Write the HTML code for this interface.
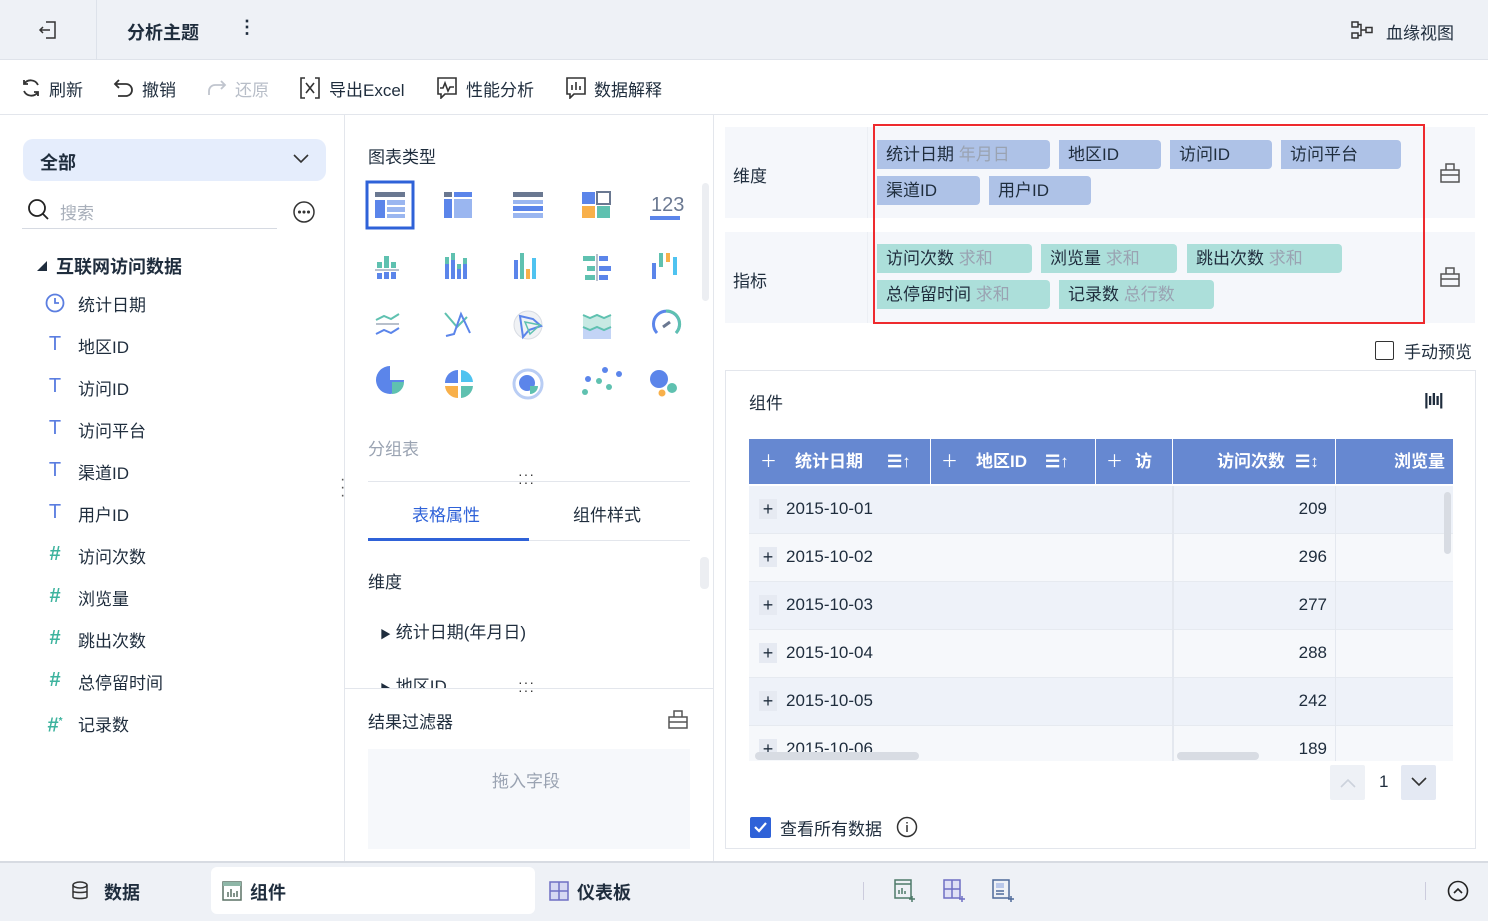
<!DOCTYPE html>
<html><head><meta charset="utf-8"><style>
*{box-sizing:border-box;margin:0;padding:0}
body{width:1488px;height:921px;overflow:hidden;background:#fff;font-family:"Liberation Sans","Noto Sans CJK SC",sans-serif;color:#1f2d3d;position:relative;font-size:17px}
.a{position:absolute;white-space:nowrap}
.tag{position:absolute;height:29px;line-height:29px;padding-left:9px;font-size:17px;border-radius:0 4px 4px 0;color:#1f2d3d;white-space:nowrap}
.d{background:#aec2e7}.m{background:#acdfda}
.g{color:#9aa3b2}
.fld{position:absolute;left:44px;font-size:17px;white-space:nowrap;width:250px;height:24px}
.fld i{position:absolute;left:0;top:0;width:22px;font-style:normal;text-align:center;font-size:20px;line-height:22px}
.fld span{position:absolute;left:34px;top:0;white-space:nowrap}
.row{position:absolute;left:749px;width:704px;height:48px;border-bottom:1px solid #e6eaf0}
.row .p{position:absolute;left:10px;top:13px;width:18px;height:20px;background:#e6eaf2;text-align:center;line-height:20px;font-size:18px}
.row .t{position:absolute;left:37px;top:13px;font-size:17px}
.row .n{position:absolute;left:520px;width:58px;text-align:right;top:13px;font-size:17px}
.th{position:absolute;top:439px;height:45px;background:#6688d1;color:#fff;font-weight:bold;font-size:17px;line-height:45px;white-space:nowrap}
.tb{position:absolute;top:76px;font-size:17px;white-space:nowrap}
</style></head><body>
<!-- top bar -->
<div class="a" style="left:0;top:0;width:1488px;height:60px;background:#eef1f6;border-bottom:1px solid #dfe3ea"></div>
<div class="a" style="left:96px;top:0;width:1px;height:60px;background:#dde2ea"></div>
<svg class="a" style="left:37px;top:19px" width="22" height="22" viewBox="0 0 22 22" fill="none" stroke="#333" stroke-width="1.5"><path d="M9 3h9v16H9M3 11h10M6 8l-3 3 3 3"/></svg>
<div class="a" style="left:127px;top:19px;font-size:18px;font-weight:bold">分析主题</div>
<div class="a" style="left:238px;top:17px;font-size:18px;font-weight:bold">⋮</div>
<svg class="a" style="left:1351px;top:21px" width="22" height="18" viewBox="0 0 22 18" fill="none" stroke="#333" stroke-width="1.5"><rect x="1" y="1" width="6" height="5"/><rect x="1" y="12" width="6" height="5"/><rect x="15" y="6.5" width="6" height="5"/><path d="M7 3.5h3v11H7M10 9h5"/></svg>
<div class="a" style="left:1386px;top:19px;font-size:17px">血缘视图</div>
<!-- toolbar -->
<div class="a" style="left:0;top:114px;width:1488px;height:1px;background:#e3e6ec"></div>
<svg class="a" style="left:20px;top:77px" width="22" height="22" viewBox="0 0 22 22" fill="none" stroke="#333" stroke-width="1.8"><path d="M18 8A8 8 0 0 0 4 7M4 3v4h4M4 14a8 8 0 0 0 14 1M18 19v-4h-4"/></svg>
<div class="tb" style="left:49px">刷新</div>
<svg class="a" style="left:113px;top:77px" width="22" height="22" viewBox="0 0 22 22" fill="none" stroke="#333" stroke-width="1.8"><path d="M6 3L2 7l4 4M2 7h11a6 6 0 0 1 0 12H5"/></svg>
<div class="tb" style="left:142px">撤销</div>
<svg class="a" style="left:206px;top:77px" width="22" height="22" viewBox="0 0 22 22" fill="none" stroke="#c0c5ce" stroke-width="1.8"><path d="M15 4l4 4-4 4M19 8H9a6 6 0 0 0-6 6v4"/></svg>
<div class="tb" style="left:235px;color:#b8bec8">还原</div>
<svg class="a" style="left:300px;top:77px" width="20" height="22" viewBox="0 0 20 22" fill="none" stroke="#333" stroke-width="1.6"><path d="M5 1H1v20h4M15 1h4v20h-4M6 6l8 10M14 6L6 16"/></svg>
<div class="tb" style="left:329px">导出Excel</div>
<svg class="a" style="left:437px;top:77px" width="20" height="22" viewBox="0 0 20 22" fill="none" stroke="#333" stroke-width="1.6"><path d="M1 1h18v16H8l-4 4v-4H1zM3 11h3l2-5 3 8 2-4h4"/></svg>
<div class="tb" style="left:466px">性能分析</div>
<svg class="a" style="left:566px;top:77px" width="20" height="22" viewBox="0 0 20 22" fill="none" stroke="#333" stroke-width="1.6"><path d="M1 1h18v16H8l-4 4v-4H1zM6 13V8M10 13V5M14 13V9"/></svg>
<div class="tb" style="left:594px">数据解释</div>
<!-- left panel -->
<div class="a" style="left:344px;top:115px;width:1px;height:747px;background:#e3e6ec"></div>
<div class="a" style="left:23px;top:139px;width:303px;height:42px;background:#e5edfc;border-radius:10px"></div>
<div class="a" style="left:40px;top:149px;font-size:18px;font-weight:bold">全部</div>
<svg class="a" style="left:292px;top:153px" width="18" height="12" viewBox="0 0 18 12" fill="none" stroke="#333" stroke-width="1.6"><path d="M2 2l7 7 7-7"/></svg>
<svg class="a" style="left:27px;top:198px" width="24" height="24" viewBox="0 0 24 24" fill="none" stroke="#222" stroke-width="1.8"><circle cx="10" cy="10" r="8"/><path d="M16 16l5 5"/></svg>
<div class="a" style="left:60px;top:199px;font-size:17px;color:#a8afba">搜索</div>
<div class="a" style="left:22px;top:228px;width:255px;height:1px;background:#d6dae2"></div>
<svg class="a" style="left:292px;top:200px" width="24" height="24" viewBox="0 0 24 24" fill="none" stroke="#333" stroke-width="1.5"><circle cx="12" cy="12" r="10"/><circle cx="7.5" cy="12" r=".8" fill="#333"/><circle cx="12" cy="12" r=".8" fill="#333"/><circle cx="16.5" cy="12" r=".8" fill="#333"/></svg>
<div class="a" style="left:37px;top:258px;font-size:10px">◢</div>
<div class="a" style="left:56px;top:253px;font-size:18px;font-weight:bold">互联网访问数据</div>
<div class="fld" style="top:291px"><svg style="position:absolute;left:1px;top:2px" width="20" height="20" viewBox="0 0 20 20" fill="none" stroke="#5b7ee0" stroke-width="1.8"><circle cx="10" cy="10" r="8.5"/><path d="M10 5v5h4"/></svg><span>统计日期</span></div>
<div class="fld" style="top:333px"><i style="color:#5b7ee0">T</i><span>地区ID</span></div>
<div class="fld" style="top:375px"><i style="color:#5b7ee0">T</i><span>访问ID</span></div>
<div class="fld" style="top:417px"><i style="color:#5b7ee0">T</i><span>访问平台</span></div>
<div class="fld" style="top:459px"><i style="color:#5b7ee0">T</i><span>渠道ID</span></div>
<div class="fld" style="top:501px"><i style="color:#5b7ee0">T</i><span>用户ID</span></div>
<div class="fld" style="top:543px"><i style="color:#3db39e;font-weight:bold">#</i><span>访问次数</span></div>
<div class="fld" style="top:585px"><i style="color:#3db39e;font-weight:bold">#</i><span>浏览量</span></div>
<div class="fld" style="top:627px"><i style="color:#3db39e;font-weight:bold">#</i><span>跳出次数</span></div>
<div class="fld" style="top:669px"><i style="color:#3db39e;font-weight:bold">#</i><span>总停留时间</span></div>
<div class="fld" style="top:711px"><i style="color:#3db39e;font-weight:bold">#<sup style="font-size:10px">*</sup></i><span>记录数</span></div>
<div class="a" style="left:340px;top:476px;font-size:16px;line-height:8px;color:#555">·<br>·<br>·</div>
<!-- middle panel -->
<div class="a" style="left:713px;top:115px;width:1px;height:747px;background:#e3e6ec"></div>
<div class="a" style="left:368px;top:143px;font-size:17px">图表类型</div>
<div class="a" style="left:702px;top:183px;width:7px;height:118px;background:#eceef2;border-radius:4px"></div>
<svg class="a" style="left:365px;top:180px" width="330" height="230" viewBox="0 0 330 230">
<rect x="2" y="2" width="46" height="46" fill="none" stroke="#2f62d8" stroke-width="3"/>
<rect x="10" y="12" width="30" height="5" fill="#6a7891"/><rect x="10" y="20" width="10" height="18" fill="#5b85ea"/><rect x="22" y="20" width="18" height="5" fill="#9ab6f0"/><rect x="22" y="27" width="18" height="5" fill="#9ab6f0"/><rect x="22" y="34" width="18" height="4" fill="#9ab6f0"/>
<rect x="79" y="12" width="8" height="5" fill="#6a7891"/><rect x="89" y="12" width="18" height="5" fill="#5b85ea"/><rect x="79" y="19" width="8" height="19" fill="#5b85ea"/><rect x="89" y="19" width="18" height="19" fill="#9ab6f0"/>
<rect x="148" y="12" width="30" height="5" fill="#6a7891"/><rect x="148" y="20" width="30" height="4" fill="#9ab6f0"/><rect x="148" y="26" width="30" height="5" fill="#5b85ea"/><rect x="148" y="33" width="30" height="5" fill="#9ab6f0"/>
<rect x="217" y="12" width="13" height="12" fill="#5b85ea"/><rect x="232" y="12" width="13" height="12" fill="none" stroke="#6a7891" stroke-width="2"/><rect x="217" y="26" width="13" height="12" fill="#f8b04a"/><rect x="232" y="26" width="13" height="12" fill="#5fc1b0"/>
<text x="286" y="31" font-size="20" fill="#6a7891" font-family="Liberation Sans">123</text><rect x="285" y="36" width="30" height="4" fill="#5b85ea"/>
<g fill="#5fc1b0"><rect x="12" y="82" width="5" height="6"/><rect x="19" y="76" width="5" height="12"/><rect x="26" y="82" width="5" height="6"/></g><rect x="10" y="89" width="24" height="2" fill="#b8c0cc"/><g fill="#5b85ea"><rect x="12" y="93" width="5" height="6"/><rect x="19" y="92" width="5" height="7"/><rect x="26" y="92" width="5" height="7"/></g>
<g fill="#5b85ea"><rect x="80" y="84" width="4" height="15"/><rect x="86" y="80" width="4" height="19"/><rect x="92" y="89" width="4" height="10"/><rect x="98" y="84" width="4" height="15"/></g><g fill="#5fc1b0"><rect x="80" y="77" width="4" height="7"/><rect x="86" y="73" width="4" height="7"/><rect x="92" y="84" width="4" height="5"/><rect x="98" y="78" width="4" height="6"/></g>
<rect x="149" y="80" width="4" height="19" fill="#5b85ea"/><rect x="155" y="73" width="4" height="26" fill="#5fc1b0"/><rect x="161" y="89" width="4" height="10" fill="#f8b04a"/><rect x="167" y="78" width="4" height="21" fill="#4fc3f0"/>
<g fill="#5fc1b0"><rect x="218" y="76" width="12" height="5"/><rect x="222" y="86" width="8" height="5"/><rect x="220" y="95" width="10" height="5"/></g><rect x="231" y="74" width="2" height="27" fill="#b8c0cc"/><g fill="#5b85ea"><rect x="234" y="76" width="9" height="5"/><rect x="234" y="86" width="12" height="5"/><rect x="234" y="95" width="9" height="5"/></g>
<rect x="287" y="83" width="4" height="16" fill="#5b85ea"/><rect x="294" y="73" width="4" height="14" fill="#5fc1b0"/><rect x="301" y="73" width="4" height="9" fill="#f8b04a"/><rect x="308" y="77" width="4" height="18" fill="#4fc3f0"/>
<path d="M11 140l8-4 7 3 8-5" stroke="#5fc1b0" stroke-width="2" fill="none"/><rect x="11" y="143" width="23" height="2" fill="#b8c0cc"/><path d="M11 154l8-4 7 3 8-5" stroke="#5b85ea" stroke-width="2" fill="none"/>
<path d="M80 133l12 14 10-10" stroke="#5fc1b0" stroke-width="2" fill="none"/><path d="M81 156l8-2 7-20 9 19" stroke="#5b85ea" stroke-width="2" fill="none"/>
<circle cx="163" cy="145" r="14" fill="#f0f2f5" stroke="#d8dce3"/><path d="M155 136l13 3 8 7-12 4-6 7z" fill="none" stroke="#5b85ea" stroke-width="2"/><path d="M160 142l15 3-10 9z" fill="none" stroke="#5fc1b0" stroke-width="1.5"/>
<path d="M218 135l7 3 7-3 7 3 7-3v22h-28z" fill="#c7e9e3"/><path d="M218 147l7 3 7-3 7 3 7-3v12h-28z" fill="#c3d4f6"/><path d="M218 135l7 3 7-3 7 3 7-3M218 147l7 3 7-3 7 3 7-3" stroke-width="2" fill="none" stroke="#5fc1b0"/>
<path d="M292 153a13 13 0 1 1 19 0" fill="none" stroke="#5b85ea" stroke-width="3"/><path d="M301 131a13 13 0 0 1 10 22" fill="none" stroke="#5fc1b0" stroke-width="3"/><path d="M298 147l7-5" stroke="#6a7891" stroke-width="3"/>
<path d="M25 200v-14a14 14 0 1 0 14 14z" fill="#5b85ea"/><path d="M27 202h12a12 12 0 0 1-12 12z" fill="#5fc1b0"/>
<path d="M93 203h-13a13 13 0 0 1 13-13z" fill="#5b85ea"/><path d="M96 190a13 13 0 0 1 12 12h-12z" fill="#4fc3f0"/><path d="M93 206v12a13 13 0 0 1-13-12z" fill="#f8b04a"/><path d="M96 206h12a13 13 0 0 1-12 12z" fill="#5fc1b0"/>
<circle cx="163" cy="204" r="14" fill="none" stroke="#b9cdf4" stroke-width="3"/><circle cx="162" cy="203" r="8" fill="#5b85ea"/><path d="M165 206h8a8 8 0 0 1-8 8z" fill="#5fc1b0"/>
<g fill="#5b85eb"><circle cx="240" cy="190" r="3"/><circle cx="254" cy="194" r="3"/><circle cx="223" cy="199" r="3"/></g><g fill="#5fc1b0"><circle cx="234" cy="201" r="3"/><circle cx="244" cy="207" r="3"/><circle cx="220" cy="212" r="3"/></g>
<circle cx="294" cy="199" r="9" fill="#5b85ea"/><circle cx="307" cy="208" r="5" fill="#5fc1b0"/><circle cx="297" cy="213" r="3.5" fill="#f8b04a"/>
</svg>
<div class="a" style="left:368px;top:435px;font-size:17px;color:#9aa3b2">分组表</div>
<div class="a" style="left:518px;top:470px;font-size:14px;letter-spacing:1px;line-height:8px;color:#333">···<br>···</div>
<div class="a" style="left:368px;top:481px;width:322px;height:1px;background:#e3e6ec"></div>
<div class="a" style="left:412px;top:501px;font-size:17px;color:#2f62d8">表格属性</div>
<div class="a" style="left:573px;top:501px;font-size:17px">组件样式</div>
<div class="a" style="left:368px;top:540px;width:322px;height:1px;background:#e3e6ec"></div>
<div class="a" style="left:368px;top:538px;width:161px;height:3px;background:#2f62d8"></div>
<div class="a" style="left:700px;top:557px;width:9px;height:32px;background:#eceef2;border-radius:4px"></div>
<div class="a" style="left:368px;top:568px;font-size:17px">维度</div>
<div class="a" style="left:380px;top:618px;font-size:17px"><span style="font-size:11px">▶</span> 统计日期(年月日)</div>
<div class="a" style="left:380px;top:672px;font-size:17px;height:16px;overflow:hidden"><span style="font-size:11px">▶</span> 地区ID</div>
<div class="a" style="left:345px;top:688px;width:368px;height:1px;background:#e3e6ec"></div>
<div class="a" style="left:518px;top:678px;font-size:14px;letter-spacing:1px;line-height:8px;color:#333">···<br>···</div>
<div class="a" style="left:368px;top:708px;font-size:17px">结果过滤器</div>
<svg class="a" style="left:668px;top:710px" width="20" height="19" viewBox="0 0 20 19" fill="none" stroke="#555" stroke-width="1.5"><path d="M1 7h18v11H1zM6 7V1h8v6M1 12h18"/></svg>
<div class="a" style="left:368px;top:749px;width:322px;height:100px;background:#f6f8fb"></div>
<div class="a" style="left:492px;top:767px;font-size:17px;color:#9aa3b2">拖入字段</div>
<!-- right panel -->
<div class="a" style="left:725px;top:127px;width:750px;height:91px;background:#f5f7fb"></div>
<div class="a" style="left:867px;top:127px;width:1px;height:91px;background:#eceff4"></div>
<div class="a" style="left:733px;top:162px;font-size:17px">维度</div>
<div class="a" style="left:725px;top:232px;width:750px;height:91px;background:#f5f7fb"></div>
<div class="a" style="left:867px;top:232px;width:1px;height:91px;background:#eceff4"></div>
<div class="a" style="left:733px;top:267px;font-size:17px">指标</div>
<div class="tag d" style="left:877px;top:140px;width:173px">统计日期 <span class="g">年月日</span></div>
<div class="tag d" style="left:1059px;top:140px;width:102px">地区ID</div>
<div class="tag d" style="left:1170px;top:140px;width:102px">访问ID</div>
<div class="tag d" style="left:1281px;top:140px;width:120px">访问平台</div>
<div class="tag d" style="left:877px;top:176px;width:103px">渠道ID</div>
<div class="tag d" style="left:989px;top:176px;width:102px">用户ID</div>
<div class="tag m" style="left:877px;top:244px;width:155px">访问次数 <span class="g">求和</span></div>
<div class="tag m" style="left:1041px;top:244px;width:136px">浏览量 <span class="g">求和</span></div>
<div class="tag m" style="left:1187px;top:244px;width:155px">跳出次数 <span class="g">求和</span></div>
<div class="tag m" style="left:877px;top:280px;width:173px">总停留时间 <span class="g">求和</span></div>
<div class="tag m" style="left:1059px;top:280px;width:155px">记录数 <span class="g">总行数</span></div>
<div class="a" style="left:873px;top:124px;width:552px;height:200px;border:2px solid #ee2a2e"></div>
<svg class="a" style="left:1440px;top:163px" width="20" height="20" viewBox="0 0 20 20" fill="none" stroke="#555" stroke-width="1.5"><path d="M1 7h18v12H1zM6 7V1h8v6M1 12h18"/></svg>
<svg class="a" style="left:1440px;top:267px" width="20" height="20" viewBox="0 0 20 20" fill="none" stroke="#555" stroke-width="1.5"><path d="M1 7h18v12H1zM6 7V1h8v6M1 12h18"/></svg>
<div class="a" style="left:1375px;top:341px;width:19px;height:19px;border:1.5px solid #333;border-radius:2px"></div>
<div class="a" style="left:1404px;top:338px;font-size:17px">手动预览</div>
<div class="a" style="left:725px;top:370px;width:751px;height:479px;border:1px solid #e3e6ec"></div>
<div class="a" style="left:749px;top:389px;font-size:17px">组件</div>
<div class="a" style="left:1424px;top:390px;font-size:17px;font-weight:bold;letter-spacing:-1px">|ılı|</div>
<div class="th" style="left:749px;width:181px"><span style="margin-left:11px;font-weight:normal">＋</span><span style="margin-left:18px">统计日期</span><span style="margin-left:24px">☰↑</span></div>
<div class="th" style="left:931px;width:164px"><span style="margin-left:10px;font-weight:normal">＋</span><span style="margin-left:18px">地区ID</span><span style="margin-left:18px">☰↑</span></div>
<div class="th" style="left:1096px;width:76px;overflow:hidden"><span style="margin-left:10px;font-weight:normal">＋</span><span style="margin-left:12px">访</span></div>
<div class="th" style="left:1173px;width:162px"><span style="margin-left:44px">访问次数</span><span style="margin-left:10px">☰↕</span></div>
<div class="th" style="left:1336px;width:117px;text-align:right;padding-right:8px">浏览量</div>
<div class="row" style="top:486px;background:#eef2f9"><div class="p">+</div><div class="t">2015-10-01</div><div class="n">209</div></div>
<div class="row" style="top:534px;background:#f6f8fb"><div class="p">+</div><div class="t">2015-10-02</div><div class="n">296</div></div>
<div class="row" style="top:582px;background:#eef2f9"><div class="p">+</div><div class="t">2015-10-03</div><div class="n">277</div></div>
<div class="row" style="top:630px;background:#f6f8fb"><div class="p">+</div><div class="t">2015-10-04</div><div class="n">288</div></div>
<div class="row" style="top:678px;background:#eef2f9"><div class="p">+</div><div class="t">2015-10-05</div><div class="n">242</div></div>
<div class="row" style="top:726px;height:35px;background:#f6f8fb;overflow:hidden;border:0"><div class="p">+</div><div class="t">2015-10-06</div><div class="n">189</div></div>
<div class="a" style="left:1172px;top:486px;width:2px;height:275px;background:#e4e8ef"></div>
<div class="a" style="left:1335px;top:486px;width:1px;height:275px;background:#e4e8ef"></div>
<div class="a" style="left:1444px;top:492px;width:7px;height:62px;background:#d8dce3;border-radius:4px"></div>
<div class="a" style="left:755px;top:752px;width:164px;height:8px;background:#d8dce3;border-radius:4px"></div>
<div class="a" style="left:1177px;top:752px;width:82px;height:8px;background:#d8dce3;border-radius:4px"></div>
<div class="a" style="left:1330px;top:765px;width:35px;height:35px;background:#eef1f6;border-radius:2px;text-align:center;line-height:35px;color:#ccd"><svg width="16" height="10" viewBox="0 0 16 10" fill="none" stroke="#ccd2dc" stroke-width="1.6"><path d="M1 9l7-7 7 7"/></svg></div>
<div class="a" style="left:1379px;top:772px;font-size:17px">1</div>
<div class="a" style="left:1401px;top:765px;width:35px;height:35px;background:#e4e9f3;border-radius:2px;text-align:center;line-height:33px"><svg width="16" height="10" viewBox="0 0 16 10" fill="none" stroke="#333" stroke-width="1.6"><path d="M1 1l7 7 7-7"/></svg></div>
<div class="a" style="left:750px;top:817px;width:21px;height:21px;background:#2f62d8;border-radius:2px"><svg width="21" height="21" viewBox="0 0 21 21" fill="none" stroke="#fff" stroke-width="2.2"><path d="M5 10l4 4 7-8"/></svg></div>
<div class="a" style="left:780px;top:815px;font-size:17px">查看所有数据</div>
<svg class="a" style="left:896px;top:816px" width="22" height="22" viewBox="0 0 22 22" fill="none" stroke="#333" stroke-width="1.5"><circle cx="11" cy="11" r="9.5"/><path d="M11 9v7M11 6v1.5"/></svg>
<!-- bottom bar -->
<div class="a" style="left:0;top:861px;width:1488px;height:60px;background:#eef1f6;border-top:2px solid #d7dbe2"></div>
<div class="a" style="left:211px;top:867px;width:324px;height:47px;background:#fff;border-radius:6px"></div>
<svg class="a" style="left:71px;top:881px" width="18" height="20" viewBox="0 0 18 20" fill="none" stroke="#333" stroke-width="1.5"><ellipse cx="9" cy="4" rx="7" ry="3"/><path d="M2 4v12c0 2 14 2 14 0V4M2 10c0 2 14 2 14 0"/></svg>
<div class="a" style="left:104px;top:879px;font-size:18px;font-weight:bold">数据</div>
<svg class="a" style="left:222px;top:881px" width="20" height="20" viewBox="0 0 20 20"><rect x="1" y="1" width="18" height="18" fill="none" stroke="#5b7266" stroke-width="1.5"/><rect x="1" y="1" width="18" height="4" fill="#8fb7a8"/><path d="M6 16v-5M9 16v-8M12 16v-4M15 16v-6" stroke="#5b7266" stroke-width="1.5"/></svg>
<div class="a" style="left:250px;top:879px;font-size:18px;font-weight:bold">组件</div>
<svg class="a" style="left:549px;top:881px" width="20" height="20" viewBox="0 0 20 20" fill="none" stroke="#6f6fc4" stroke-width="1.5"><rect x="1" y="1" width="18" height="18" fill="#d6d8f3"/><path d="M10 1v18M1 10h18"/></svg>
<div class="a" style="left:577px;top:879px;font-size:18px;font-weight:bold">仪表板</div>
<div class="a" style="left:863px;top:882px;width:1px;height:18px;background:#ccd"></div>
<svg class="a" style="left:894px;top:879px" width="24" height="24" viewBox="0 0 24 24" fill="none" stroke="#4f7a6a" stroke-width="1.5"><rect x="1" y="1" width="16" height="18"/><path d="M1 5h16M5 15v-4M8 15v-6M11 15v-3M18 17v6M15 20h6"/></svg>
<svg class="a" style="left:943px;top:879px" width="24" height="24" viewBox="0 0 24 24" fill="none" stroke="#6f6fc4" stroke-width="1.5"><rect x="1" y="1" width="16" height="18" fill="#dfe0f5"/><path d="M9 1v18M1 10h16M19 17v6M16 20h6"/></svg>
<svg class="a" style="left:992px;top:879px" width="24" height="24" viewBox="0 0 24 24" fill="none" stroke="#4f6a9a" stroke-width="1.5"><rect x="1" y="1" width="16" height="18"/><rect x="4" y="4" width="8" height="5" fill="#b9c8ea" stroke="none"/><path d="M4 12h8M4 15h8M19 17v6M16 20h6"/></svg>
<div class="a" style="left:1425px;top:882px;width:1px;height:18px;background:#ccd"></div>
<svg class="a" style="left:1447px;top:880px" width="22" height="22" viewBox="0 0 22 22" fill="none" stroke="#222" stroke-width="1.6"><circle cx="11" cy="11" r="9.5"/><path d="M7 13l4-4 4 4"/></svg>
</body></html>
